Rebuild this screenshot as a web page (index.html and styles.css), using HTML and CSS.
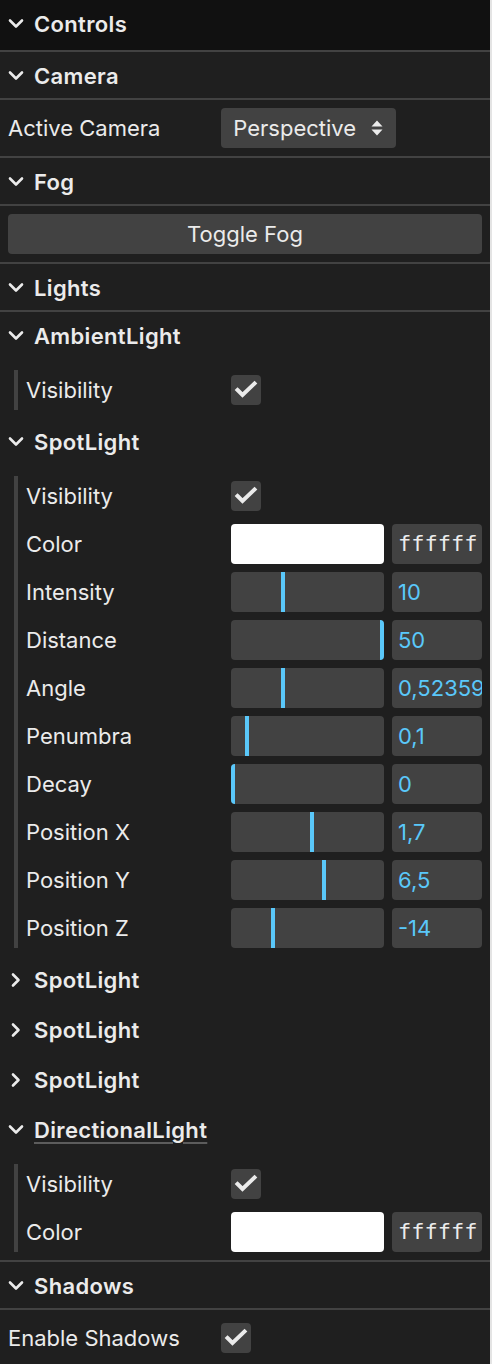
FILE: index.html
```html
<!DOCTYPE html>
<html>
<head>
<meta charset="utf-8">
<link rel="stylesheet" href="styles.css">
</head>
<body>
<div class="gui">
  <div class="title root-title"><svg class="chev" viewBox="0 0 16 16"><path d="M2 4.5 L8 10.5 L14 4.5"/></svg>Controls</div>
  <div class="children">

    <div class="folder">
      <div class="title top-title"><svg class="chev" viewBox="0 0 16 16"><path d="M2 4.5 L8 10.5 L14 4.5"/></svg>Camera</div>
      <div class="children">
        <div class="controller">
          <div class="name">Active Camera</div>
          <div class="widget">
            <div class="select"><span>Perspective</span><svg class="updown" viewBox="0 0 14 18"><path d="M1.5 7.5 L7 1.5 L12.5 7.5 Z M1.5 10.5 L7 16.5 L12.5 10.5 Z"/></svg></div>
          </div>
        </div>
      </div>
    </div>

    <div class="folder">
      <div class="title top-title"><svg class="chev" viewBox="0 0 16 16"><path d="M2 4.5 L8 10.5 L14 4.5"/></svg>Fog</div>
      <div class="children">
        <div class="controller">
          <div class="button">Toggle Fog</div>
        </div>
      </div>
    </div>

    <div class="folder">
      <div class="title top-title"><svg class="chev" viewBox="0 0 16 16"><path d="M2 4.5 L8 10.5 L14 4.5"/></svg>Lights</div>
      <div class="children">

        <div class="sub">
          <div class="title sub-title"><svg class="chev" viewBox="0 0 16 16"><path d="M2 4.5 L8 10.5 L14 4.5"/></svg>AmbientLight</div>
          <div class="sub-children">
            <div class="controller">
              <div class="name">Visibility</div>
              <div class="widget"><div class="checkbox"><svg viewBox="0 0 30 30"><path d="M6.5 15 L11.5 20 L23.5 8.5"/></svg></div></div>
            </div>
          </div>
        </div>

        <div class="sub">
          <div class="title sub-title"><svg class="chev" viewBox="0 0 16 16"><path d="M2 4.5 L8 10.5 L14 4.5"/></svg>SpotLight</div>
          <div class="sub-children">
            <div class="controller">
              <div class="name">Visibility</div>
              <div class="widget"><div class="checkbox"><svg viewBox="0 0 30 30"><path d="M6.5 15 L11.5 20 L23.5 8.5"/></svg></div></div>
            </div>
            <div class="controller">
              <div class="name">Color</div>
              <div class="widget"><div class="swatch"></div><div class="hex">ffffff</div></div>
            </div>
            <div class="controller">
              <div class="name">Intensity</div>
              <div class="widget"><div class="slider"><div class="fill" style="width:33.4%"></div></div><div class="num">10</div></div>
            </div>
            <div class="controller">
              <div class="name">Distance</div>
              <div class="widget"><div class="slider"><div class="fill" style="width:100%"></div></div><div class="num">50</div></div>
            </div>
            <div class="controller">
              <div class="name">Angle</div>
              <div class="widget"><div class="slider"><div class="fill" style="width:33.4%"></div></div><div class="num">0,52359</div></div>
            </div>
            <div class="controller">
              <div class="name">Penumbra</div>
              <div class="widget"><div class="slider"><div class="fill" style="width:9.5%"></div></div><div class="num">0,1</div></div>
            </div>
            <div class="controller">
              <div class="name">Decay</div>
              <div class="widget"><div class="slider"><div class="fill" style="width:0%"></div></div><div class="num">0</div></div>
            </div>
            <div class="controller">
              <div class="name">Position X</div>
              <div class="widget"><div class="slider"><div class="fill" style="width:52.8%"></div></div><div class="num">1,7</div></div>
            </div>
            <div class="controller">
              <div class="name">Position Y</div>
              <div class="widget"><div class="slider"><div class="fill" style="width:60.8%"></div></div><div class="num">6,5</div></div>
            </div>
            <div class="controller">
              <div class="name">Position Z</div>
              <div class="widget"><div class="slider"><div class="fill" style="width:26.7%"></div></div><div class="num">-14</div></div>
            </div>
          </div>
        </div>

        <div class="sub">
          <div class="title sub-title"><svg class="chev" viewBox="0 0 16 16"><path d="M5 2.5 L10.5 8 L5 13.5"/></svg>SpotLight</div>
        </div>
        <div class="sub">
          <div class="title sub-title"><svg class="chev" viewBox="0 0 16 16"><path d="M5 2.5 L10.5 8 L5 13.5"/></svg>SpotLight</div>
        </div>
        <div class="sub">
          <div class="title sub-title"><svg class="chev" viewBox="0 0 16 16"><path d="M5 2.5 L10.5 8 L5 13.5"/></svg>SpotLight</div>
        </div>

        <div class="sub">
          <div class="title sub-title"><svg class="chev" viewBox="0 0 16 16"><path d="M2 4.5 L8 10.5 L14 4.5"/></svg><span class="focused">DirectionalLight</span></div>
          <div class="sub-children">
            <div class="controller">
              <div class="name">Visibility</div>
              <div class="widget"><div class="checkbox"><svg viewBox="0 0 30 30"><path d="M6.5 15 L11.5 20 L23.5 8.5"/></svg></div></div>
            </div>
            <div class="controller">
              <div class="name">Color</div>
              <div class="widget"><div class="swatch"></div><div class="hex">ffffff</div></div>
            </div>
          </div>
        </div>

      </div>
    </div>

    <div class="folder">
      <div class="title top-title"><svg class="chev" viewBox="0 0 16 16"><path d="M2 4.5 L8 10.5 L14 4.5"/></svg>Shadows</div>
      <div class="children">
        <div class="controller">
          <div class="name">Enable Shadows</div>
          <div class="widget"><div class="checkbox"><svg viewBox="0 0 30 30"><path d="M6.5 15 L11.5 20 L23.5 8.5"/></svg></div></div>
        </div>
      </div>
    </div>

  </div>
</div>
</body>
</html>
```

FILE: styles.css
```css
html, body {
  margin: 0;
  padding: 0;
  background: #e4e4e4;
}
* {
  box-sizing: border-box;
}
.gui {
  width: 490px;
  min-height: 1364px;
  background: #1f1f1f;
  color: #ebebeb;
  font-family: Inter, "Noto Sans", sans-serif;
  font-size: 22px;
  line-height: 1;
}
.title {
  height: 50px;
  padding: 0 8px;
  display: flex;
  align-items: center;
  font-weight: 600;
  letter-spacing: 0.35px;
  white-space: nowrap;
}
.root-title {
  background: #111111;
  padding-bottom: 2px;
}
.top-title {
  border-top: 2px solid #424242;
  border-bottom: 2px solid #424242;
  padding-top: 2px;
}
.sub-title {
  padding-bottom: 2px;
}
.chev {
  width: 16px;
  height: 16px;
  margin-right: 10px;
  flex-shrink: 0;
}
.chev path {
  fill: none;
  stroke: #ebebeb;
  stroke-width: 2.6;
  stroke-linecap: round;
  stroke-linejoin: round;
}
.focused {
  text-decoration: underline;
  text-decoration-color: #5c5c5c;
  text-decoration-thickness: 2px;
  text-underline-offset: 4px;
}
.sub-children {
  margin-left: 14px;
  border-left: 4px solid #424242;
}
.controller {
  display: flex;
  align-items: center;
  padding: 0 8px;
  margin: 8px 0;
  height: 40px;
}
.name {
  width: 45%;
  flex-shrink: 0;
  padding-right: 8px;
  white-space: nowrap;
  line-height: 40px;
}
.widget {
  display: flex;
  align-items: center;
  flex: 1;
  min-width: 0;
  height: 40px;
  gap: 8px;
}
.select {
  display: flex;
  align-items: center;
  height: 40px;
  background: #424242;
  border-radius: 4px;
  padding: 0 12px 0 12px;
  gap: 14px;
}
.updown {
  width: 14px;
  height: 18px;
}
.updown path {
  fill: #ebebeb;
}
.button {
  width: 100%;
  height: 40px;
  background: #424242;
  border-radius: 4px;
  display: flex;
  align-items: center;
  justify-content: center;
}
.checkbox {
  width: 30px;
  height: 30px;
  background: #424242;
  border-radius: 4px;
}
.checkbox svg {
  width: 30px;
  height: 30px;
  display: block;
}
.checkbox path {
  fill: none;
  stroke: #ebebeb;
  stroke-width: 4;
  stroke-linecap: square;
  stroke-linejoin: miter;
}
.swatch {
  flex: 1;
  height: 40px;
  background: #ffffff;
  border-radius: 4px;
}
.hex {
  width: 90px;
  flex-shrink: 0;
  height: 40px;
  line-height: 40px;
  background: #424242;
  border-radius: 4px;
  padding-left: 6px;
  font-family: "DejaVu Sans Mono", "Liberation Mono", monospace;
  font-size: 22px;
  overflow: hidden;
  white-space: nowrap;
}
.slider {
  flex: 1;
  height: 40px;
  background: #424242;
  border-radius: 4px;
  padding-right: 4px;
  overflow: hidden;
}
.fill {
  box-sizing: content-box;
  height: 100%;
  border-right: 4px solid #5ac8fa;
}
.num {
  width: 90px;
  flex-shrink: 0;
  height: 40px;
  line-height: 40px;
  background: #424242;
  border-radius: 4px;
  padding-left: 6px;
  color: #5ac8fa;
  overflow: hidden;
  white-space: nowrap;
}
```
